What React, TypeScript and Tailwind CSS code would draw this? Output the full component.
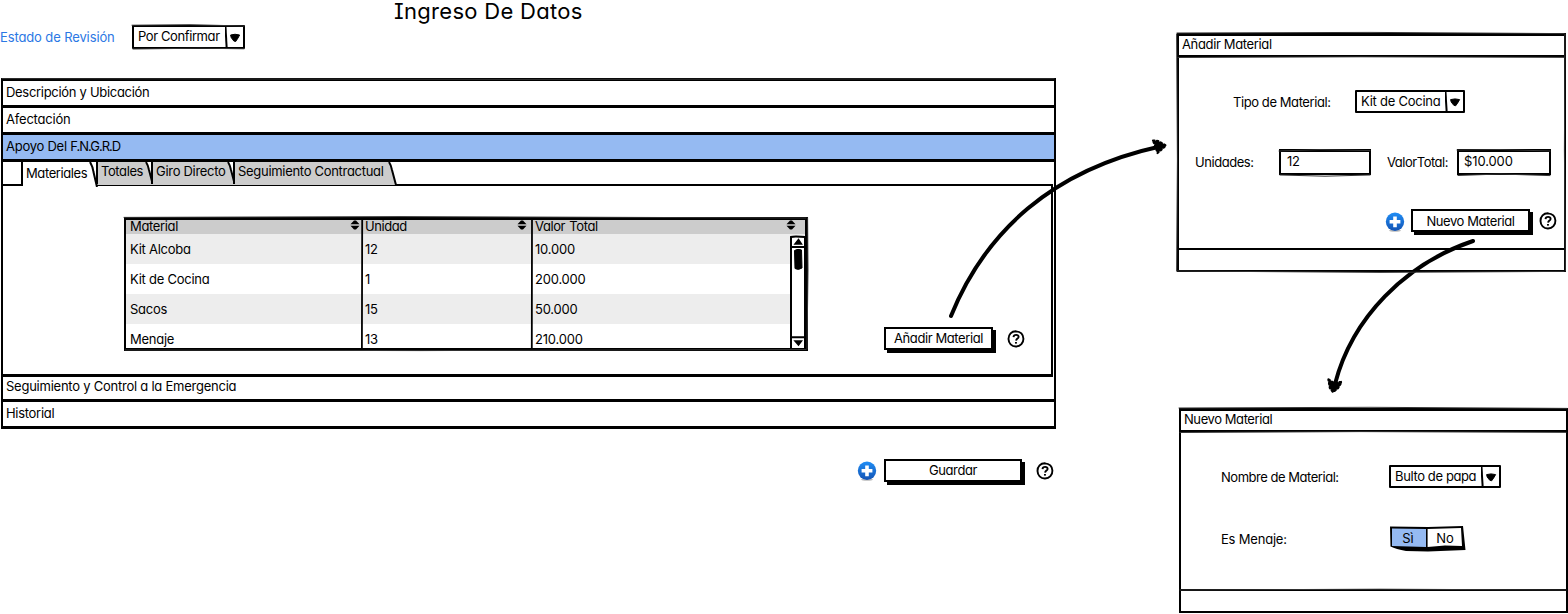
import type { ReactNode } from "react";

function Txt({ children, className = "tracking-[-0.3px]" }: { children: ReactNode; className?: string }) {
  return <span className={`block whitespace-nowrap leading-4 ${className}`}>{children}</span>;
}

function Select({ children, className = "" }: { children: ReactNode; className?: string }) {
  return (
    <div className={`flex rounded-[1px] border-2 border-black bg-white ${className}`}>
      <div className="flex-1 pt-px pl-[4px]">{children}</div>
      <svg className="h-full w-[18px] shrink-0" viewBox="0 0 18 20" preserveAspectRatio="none">
        <path d="M0.5 0 L1.6 20" stroke="#000" strokeWidth="2" fill="none" />
        <path d="M5.6 8 Q10 6.5 14.6 8 L13 11 L10.7 14.5 L8.8 14 L6.2 10.5 Z" stroke="#000" strokeLinejoin="round" />
      </svg>
    </div>
  );
}

function Button({ children, className = "" }: { children: ReactNode; className?: string }) {
  return (
    <div className={`flex h-[23px] justify-center border-2 border-black bg-white pt-px shadow-[3px_3px_0_0_#000] ${className}`}>
      {children}
    </div>
  );
}

function Help() {
  return (
    <svg className="h-[18px] w-[18px] shrink-0" viewBox="0 0 18 18" fill="none" stroke="#000">
      <path d="M9.4 1.3 C4.5 1 1.4 4.6 1.5 9 C1.6 13.2 4.6 16.6 9 16.5 C13.4 16.4 16.6 13 16.4 8.6 C16.2 4.5 13.3 1.6 8.6 1.4" strokeWidth="1.9" />
      <path d="M6.5 7.1 C6.6 5.4 7.8 4.9 9.2 4.9 C10.7 4.9 11.7 5.7 11.6 7 C11.4 8.7 9.3 8.6 9.1 10.7" strokeWidth="1.9" />
      <path d="M8.9 12 L9.1 13.7" strokeWidth="1.9" />
    </svg>
  );
}

function Plus() {
  return (
    <svg className="h-5 w-5 shrink-0" viewBox="0 0 20 20">
      <defs>
        <linearGradient id="plusFill" x1="0" y1="0" x2="0" y2="1">
          <stop offset="0" stopColor="#1f8df5" />
          <stop offset="1" stopColor="#1454b4" />
        </linearGradient>
      </defs>
      <ellipse cx="10" cy="18.6" rx="6" ry="1.2" fill="#bbb" />
      <circle cx="10" cy="9.8" r="9.2" fill="url(#plusFill)" />
      <path d="M10 4.4 V15.2 M4.6 9.8 H15.4" stroke="#fff" strokeWidth="3.6" />
    </svg>
  );
}

function Sort() {
  return (
    <svg className="h-[10px] w-[10px] shrink-0" viewBox="0 0 10 10">
      <path d="M0.5 4.2 L4 0.4 H6 L9.5 4.2 Z M0.5 5.8 L4 9.6 H6 L9.5 5.8 Z" />
    </svg>
  );
}

function Section({ children, className = "h-[27px] pt-[3px]" }: { children: ReactNode; className?: string }) {
  return <div className={`border-b-[3px] border-black pl-[3px] ${className}`}>{children}</div>;
}

function Tab({ children, width, className = "" }: { children: ReactNode; width: number; className?: string }) {
  return (
    <div className={`relative h-[22px] ${className}`} style={{ width }}>
      <svg className="absolute top-0 left-0 h-[23px] overflow-visible" width={width} height="23">
        <path d={`M0 0 H${width - 8} L${width - 1} 23 H0 Z`} fill="#ccc" />
        <path d={`M1 0 V22 M${width - 8} 0 Q${width - 6} 3 ${width - 5} 8 L${width - 1} 23`} fill="none" stroke="#000" strokeWidth="2" />
      </svg>
      <div className="relative pt-px pl-[5px]">{children}</div>
    </div>
  );
}

const rows = [
  ["Kit Alcoba", "12", "10.000"],
  ["Kit de Cocina", "1", "200.000"],
  ["Sacos", "15", "50.000"],
  ["Menaje", "13", "210.000"],
];

function MaterialTable() {
  return (
    <div className="relative h-[134px] w-[684px] border-y-[3px] border-r-[3px] border-l-2 border-black">
      <div className="grid h-[14px] grid-cols-[238px_170px_1fr] bg-[#ccc]">
        <div className="flex justify-between pr-[4px] pl-1"><Txt className="-mt-[2px] tracking-[-0.35px]">Material</Txt><Sort /></div>
        <div className="flex justify-between pr-[7px] pl-[1px]"><Txt className="-mt-[2px] tracking-[-0.45px]">Unidad</Txt><Sort /></div>
        <div className="flex justify-between pr-[9px] pl-[1px]"><Txt className="-mt-[2px] tracking-[-0.4px] [word-spacing:1px]">Valor Total</Txt><Sort /></div>
      </div>
      <div className="h-[114px] overflow-hidden">
        {rows.map((r, i) => (
          <div key={r[0]} className={`grid h-[30px] grid-cols-[238px_170px_1fr] pt-[7px] ${i % 2 ? "bg-white" : "bg-[#ededed]"}`}>
            <Txt className="pl-1 tracking-[-0.25px]">{r[0]}</Txt>
            <Txt className="pl-[1px] tracking-[-0.2px]">{r[1]}</Txt>
            <Txt className="pl-[1px] tracking-[-0.2px]">{r[2]}</Txt>
          </div>
        ))}
      </div>
      <svg className="absolute top-0 left-0 h-[128px] w-[679px]" viewBox="0 0 679 128" fill="none" stroke="#000" strokeWidth="2">
        <path d="M236.2 0 L235.9 128 M406 0 L405.8 128" strokeWidth="1.8" />
        <path d="M665 17 Q668 16 679 17 V130 H665 Z" fill="#fff" />
        <path d="M665 27 H680 M665 117.3 H680" />
        <path d="M669 24 L672.5 19.5 L675.5 24 Z M669 121 L675.5 121 L672.5 125 Z" fill="#000" strokeWidth="1.5" />
        <path d="M668.5 30.5 Q672 28.5 675.5 30 L676 48 Q672.5 50.5 669 48.5 Z" fill="#000" strokeWidth="1" />
      </svg>
    </div>
  );
}

function Field({ children, className = "" }: { children: ReactNode; className?: string }) {
  return <div className={`h-[26px] border-x-[2px] border-t-[3px] border-b-[2px] border-black pt-[1px] ${className}`}>{children}</div>;
}

function Dialog({ title, children, className = "" }: { title: ReactNode; children: ReactNode; className?: string }) {
  return (
    <section className={`flex flex-col border-x-2 border-t-[3px] border-b-2 border-black ${className}`}>
      <header className="h-[21px] border-b-2 border-black pl-[3px]">{title}</header>
      <div className="flex-1">{children}</div>
      <footer className="h-[22px] border-t-2 border-black" />
    </section>
  );
}

function Arrows() {
  return (
    <svg className="pointer-events-none absolute top-0 left-0" width="1568" height="614" fill="none" stroke="#000" strokeLinecap="round">
      <path d="M951 316 C985 232 1052 170 1160 146.5" strokeWidth="4" />
      <path d="M1153 140.5 L1158 141 L1166 145.5 L1157.5 153 L1156 148 Z" fill="#000" strokeWidth="2.2" strokeLinejoin="round" strokeDasharray="1.5 2.5" />
      <path d="M1473 241 C1405 264 1352 318 1335 384" strokeWidth="4" />
      <path d="M1328.5 379.5 L1334 383 L1341.5 382 L1338 388 L1333 392 L1330 388 Z" fill="#000" strokeWidth="2.4" strokeLinejoin="round" strokeDasharray="1.5 2.5" />
      <g strokeWidth="1" stroke="#333">
        <path d="M2 78.6 L520 79.4 L1054 78.7 M132 25.2 L190 24.7 L244 26 M133 49 L200 48.2 L244 48.8" />
        <path d="M124 217.4 L400 216.6 L806 218 M125 350 L420 350.6 L806 349.5 M807.6 218 L808 270 L807 349" />
        <path d="M1177 33 L1370 32.4 L1564 33.6 M1178 57.5 L1360 56.8 L1564 57.4 M1177 271 L1380 272.4 L1564 271.4" />
        <path d="M1176.6 34 L1177.4 160 L1176.6 271 M1565 34 L1564.4 150 L1565.4 271" />
        <path d="M1179 408 L1370 407.3 L1567 408.4 M1180 432.5 L1360 431.6 L1566 432.4 M1180 590 L1380 589.2 L1566 590" />
        <path d="M1279 151 L1320 149.6 L1370 150.6 M1280 175 L1325 176.2 L1370 175 M1457 150 L1500 149.5 L1550 151 M1458 175.5 L1500 174 L1550 175.6" />
      </g>
    </svg>
  );
}

export default function App() {
  return (
    <main className="relative flex h-[614px] w-[1568px] overflow-hidden bg-white font-['Inter',sans-serif] text-[13px] text-black [font-feature-settings:'cv11']">
      <div className="w-[1056px]">
        <h1 className="h-[25px] pl-[394px] text-[22px] leading-[22px] tracking-[0.3px] whitespace-nowrap [font-feature-settings:'cv11','cv08']">Ingreso De Datos</h1>
        <div className="flex h-[53px]">
          <Txt className="w-[132px] pt-[4px] tracking-[-0.12px] text-[#2b78e4]">Estado de Revisión</Txt>
          <Select className="h-6 w-[113px]"><Txt className="tracking-[-0.4px]">Por Confirmar</Txt></Select>
        </div>
        <div className="ml-px h-[351px] border-x-[2px] border-t-[3px] border-black">
          <Section><Txt>Descripción y Ubicación</Txt></Section>
          <Section><Txt className="tracking-[-0.2px]">Afectación</Txt></Section>
          <Section className="h-[27px] bg-[#95baf2] pt-[3px]">
            <Txt className="tracking-[-0.25px]">Apoyo Del <span className="tracking-[-1px]">F.N.G.R.D</span></Txt>
          </Section>
          <div className="flex h-[22px]">
            <div className="w-[18px]" />
            <div className="relative z-10 h-[25px] w-[77px]">
              <svg className="absolute top-0 left-0" width="77" height="25">
                <path d="M1 0 H68 L76 25 H1 Z" fill="#fff" />
                <path d="M1 0 V24 M69 0 Q72 5 72.5 10 L76 25" stroke="#000" strokeWidth="2" fill="none" />
              </svg>
              <Txt className="relative pt-[3px] pl-[5px] tracking-[-0.4px]">Materiales</Txt>
            </div>
            <Tab width={58} className="-ml-[2px]"><Txt className="tracking-[-0.4px]">Totales</Txt></Tab>
            <Tab width={85} className="-ml-[3px]"><Txt>Giro Directo</Txt></Tab>
            <Tab width={164} className="-ml-[3px]"><Txt>Seguimiento Contractual</Txt></Tab>
          </div>
          <div className="flex h-[193px] w-[1050px] border-t-2 border-r-2 border-b-[3px] border-black pt-[31px] pl-[121px]">
            <MaterialTable />
            <div className="ml-[76px] flex pt-[110px]">
              <Button className="w-[109px]"><Txt className="tracking-[-0.4px]">Añadir Material</Txt></Button>
              <div className="ml-[14px] pt-[3px]"><Help /></div>
            </div>
          </div>
          <Section className="h-[25px] pt-px"><Txt className="tracking-[-0.24px]">Seguimiento y Control a la Emergencia</Txt></Section>
          <Section><Txt>Historial</Txt></Section>
        </div>
        <div className="flex justify-end pt-[30px] pr-[2px]">
          <div className="mr-[7px] pt-[2px]"><Plus /></div>
          <Button className="mr-[14px] w-[138px]"><Txt className="tracking-[-0.4px]">Guardar</Txt></Button>
          <div className="pt-[3px]"><Help /></div>
        </div>
      </div>
      <div className="ml-[121px] pt-[33px]">
        <Dialog className="h-[239px] w-[389px]" title={<Txt className="tracking-[-0.35px]">Añadir Material</Txt>}>
          <div className="flex h-[57px] pt-[33px] pl-[54px]">
            <Txt className="w-[122px] pt-[4px] tracking-[-0.42px]">Tipo de Material:</Txt>
            <Select className="h-[23px] w-[110px]"><Txt className="tracking-[-0.25px]">Kit de Cocina</Txt></Select>
          </div>
          <div className="flex pt-[35px] pl-[16px]">
            <Txt className="w-[84px] pt-[5px] tracking-[-0.45px]">Unidades:</Txt>
            <Field className="w-[92px] pl-[6px]"><Txt>12</Txt></Field>
            <Txt className="ml-[16px] w-[70px] pt-[5px] tracking-[-0.5px] [word-spacing:-3px]">Valor Total:</Txt>
            <Field className="w-[94px] pl-[5px]"><Txt className="tracking-[-0.1px]">$10.000</Txt></Field>
          </div>
          <div className="flex pt-[34px] pl-[206px]">
            <div className="pt-[3px]"><Plus /></div>
            <Button className="ml-[6px] w-[119px]"><Txt className="pt-px tracking-[-0.42px]">Nuevo Material</Txt></Button>
            <div className="ml-[9px] pt-[3px]"><Help /></div>
          </div>
        </Dialog>
        <Dialog className="mt-[136px] ml-[2px] h-[205px] w-[389px]" title={<Txt className="tracking-[-0.42px]">Nuevo Material</Txt>}>
          <div className="flex h-[57px] pt-[33px] pl-[40px]">
            <Txt className="w-[168px] pt-[4px] tracking-[-0.47px]">Nombre de Material:</Txt>
            <Select className="h-[23px] w-[112px]"><Txt className="tracking-[-0.38px]">Bulto de papa</Txt></Select>
          </div>
          <div className="flex pt-[37px] pl-[40px]">
            <Txt className="w-[168px] pt-[5px] tracking-[-0.2px]">Es Menaje:</Txt>
            <div className="relative ml-px flex h-[26px] w-[76px]">
              <svg className="absolute top-0 left-0" width="76" height="26">
                <path d="M0 0.5 L38 1 L73 0 L75.5 24 L38 25.5 L16 25 Q6 23 0.5 20.5 Z" />
                <path d="M2 2.5 L36 3 V21 L2 20 Z" fill="#95baf2" />
                <path d="M37.6 3 L71 2 L72 20 L55 19.5 L37.6 21 Z" fill="#fff" />
              </svg>
              <Txt className="relative w-[36px] pt-[4px] text-center">Sì</Txt>
              <Txt className="relative w-[38px] pt-[4px] text-center">No</Txt>
            </div>
          </div>
        </Dialog>
      </div>
      <Arrows />
    </main>
  );
}
